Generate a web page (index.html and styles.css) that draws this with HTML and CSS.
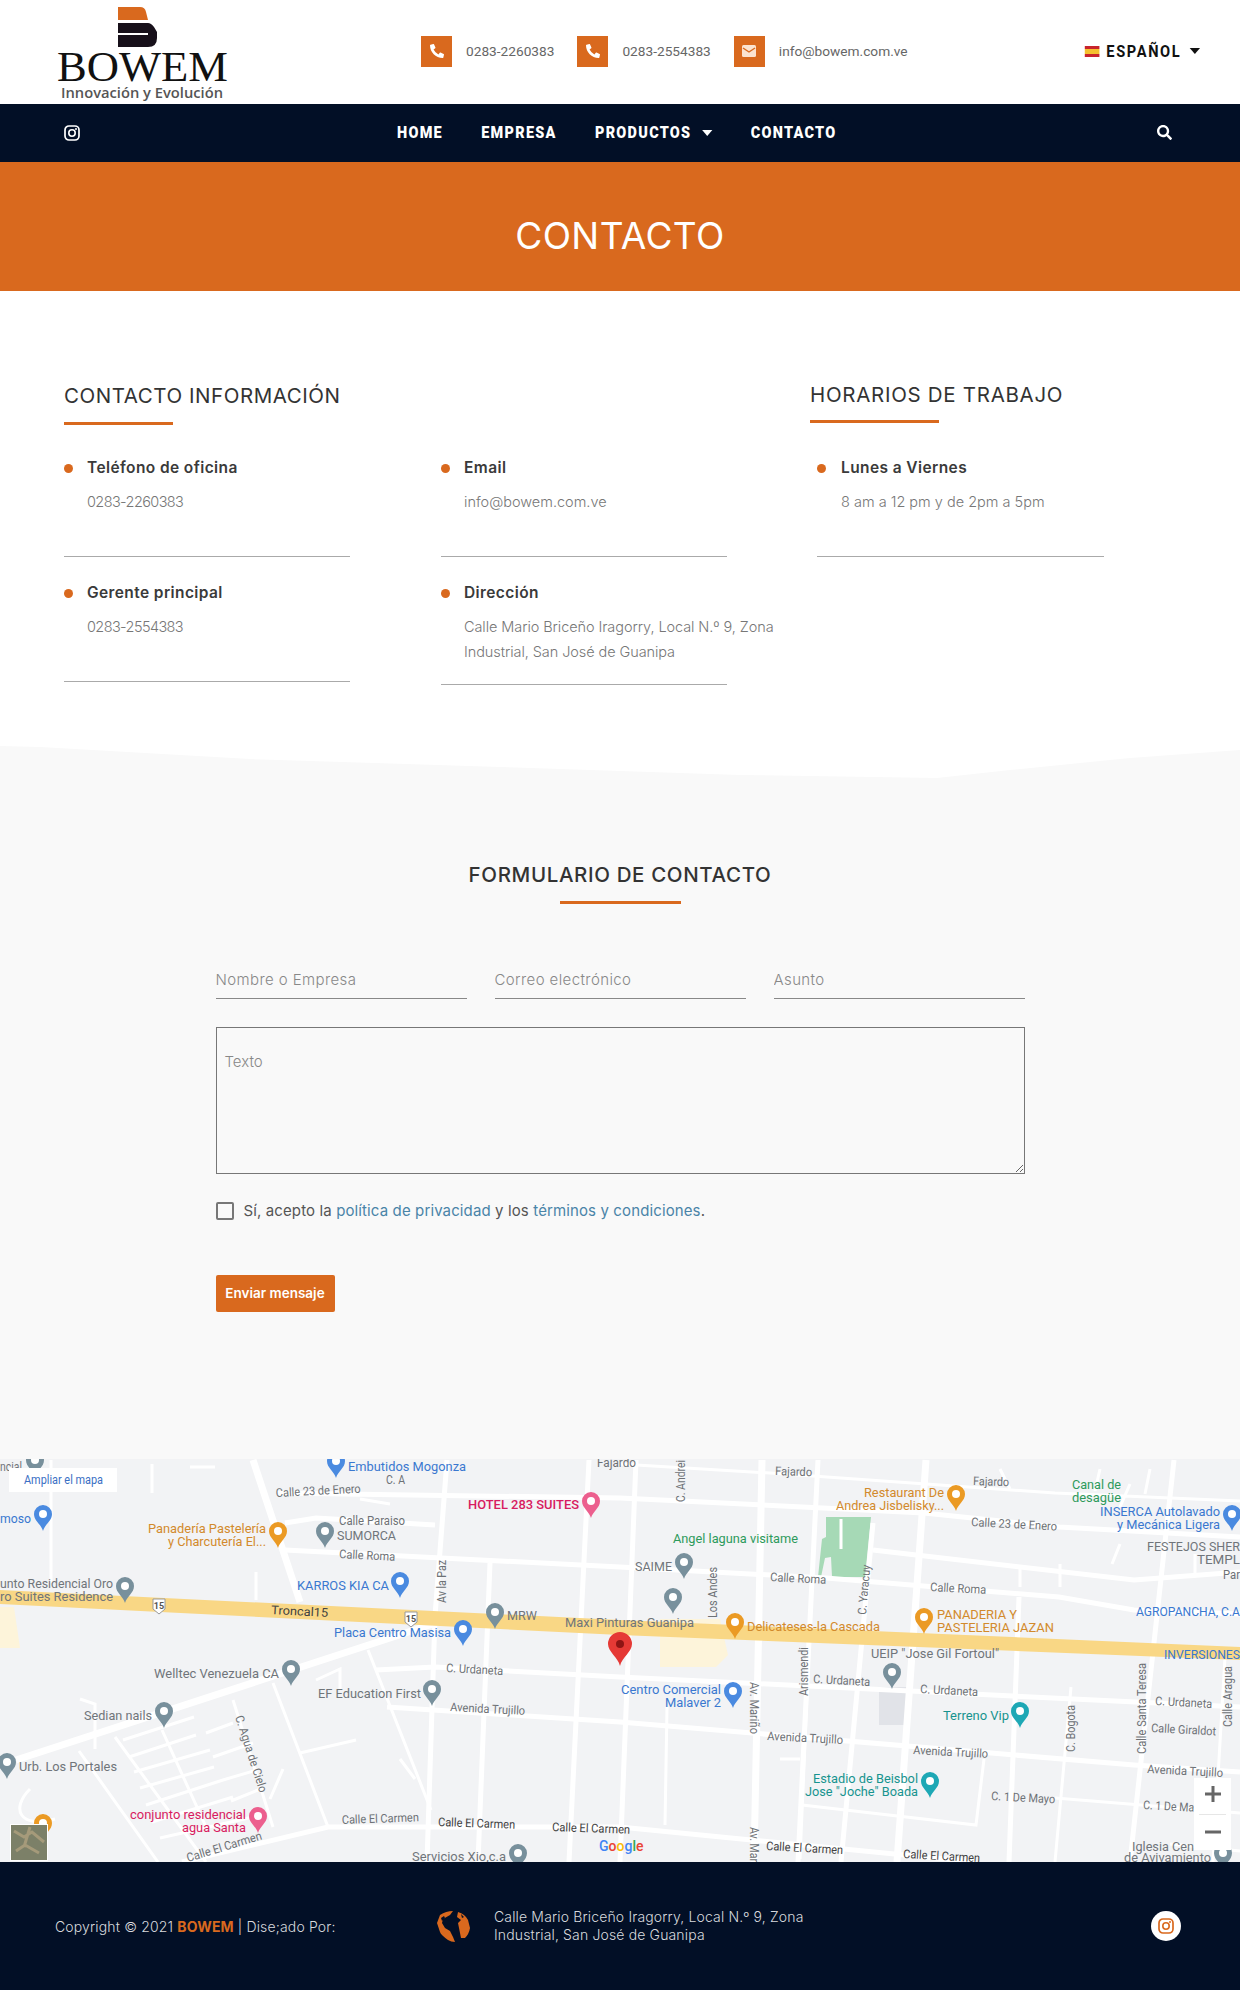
FILE: index.html
```html
<!DOCTYPE html>
<html lang="es">
<head>
    <meta charset="UTF-8">
    <meta name="viewport" content="width=device-width, initial-scale=1.0">
    <title>Contacto - Bowem</title>
    <link rel="stylesheet" href="styles.css">
</head>
<body>
    <svg class="defs" width="0" height="0">
        <symbol id="i-phone" viewBox="0 0 512 512"><path d="M497.39 361.8l-112-48a24 24 0 0 0-28 6.9l-49.6 60.6A370.66 370.66 0 0 1 130.6 204.11l60.6-49.6a23.94 23.94 0 0 0 6.9-28l-48-112A24.16 24.16 0 0 0 122.6.61l-104 24A24 24 0 0 0 0 48c0 256.5 207.9 464 464 464a24 24 0 0 0 23.4-18.6l24-104a24.29 24.29 0 0 0-14.01-27.6z"/></symbol>
        <symbol id="i-insta" viewBox="0 0 16 16"><rect x="1" y="1" width="14" height="14" rx="4" fill="none" stroke="currentColor" stroke-width="1.7"/><circle cx="8" cy="8" r="3.2" fill="none" stroke="currentColor" stroke-width="1.6"/><circle cx="12" cy="4" r="1" fill="currentColor"/></symbol>
        <symbol id="pin" viewBox="0 0 18 26"><path d="M9 0a9 9 0 0 0-9 9c0 7 7 10 9 17 2-7 9-10 9-17a9 9 0 0 0-9-9z"/><circle cx="9" cy="9" r="4" fill="#fff"/></symbol>
    </svg>

    <header class="top">
        <svg class="logo" width="171" height="104" viewBox="0 0 171 104">
            <path d="M61 7h22q5 0 6 5l2 8H61z" fill="#d9691e"/>
            <path d="M61 23h30q3 0 6 4l3 5v6q0 9-9 9H61zM61 33v2h30v-2z" fill="#17101a" fill-rule="evenodd"/>
            <text x="0" y="81" class="logo-name" textLength="171" lengthAdjust="spacingAndGlyphs">BOWEM</text>
            <text x="4" y="98" class="logo-tag" textLength="162" lengthAdjust="spacingAndGlyphs">Innovación y Evolución</text>
        </svg>
        <div class="top-contacts">
            <div class="top-item">
                <span class="top-icon"><svg width="14" height="14"><use href="#i-phone"/></svg></span>
                <span>0283-2260383</span>
            </div>
            <div class="top-item">
                <span class="top-icon"><svg width="14" height="14"><use href="#i-phone"/></svg></span>
                <span>0283-2554383</span>
            </div>
            <div class="top-item">
                <span class="top-icon"><svg width="14" height="12" viewBox="0 0 14 12"><rect width="14" height="12" rx="1.5" fill="#fbe3d0"/><path d="M1 3l6 4 6-4" fill="none" stroke="#d9691e" stroke-width="1.4"/></svg></span>
                <span>info@bowem.com.ve</span>
            </div>
        </div>
        <div class="lang">
            <span class="flag"></span>
            <span class="lang-name">ESPAÑOL</span>
            <span class="caret"></span>
        </div>
    </header>

    <nav class="nav">
        <svg class="nav-insta" width="16" height="16"><use href="#i-insta"/></svg>
        <ul class="nav-links">
            <li>HOME</li>
            <li>EMPRESA</li>
            <li>PRODUCTOS <span class="caret"></span></li>
            <li>CONTACTO</li>
        </ul>
        <svg class="nav-search" width="15" height="15" viewBox="0 0 512 512"><path fill="#fff" d="M505 442.7L405.3 343c-4.5-4.5-10.6-7-17-7H372c27.6-35.3 44-79.7 44-128C416 93.1 322.9 0 208 0S0 93.1 0 208s93.1 208 208 208c48.3 0 92.7-16.4 128-44v16.3c0 6.4 2.5 12.5 7 17l99.7 99.7c9.4 9.4 24.6 9.4 33.9 0l28.3-28.3c9.4-9.4 9.4-24.6.1-34zM208 336c-70.7 0-128-57.2-128-128 0-70.7 57.2-128 128-128 70.7 0 128 57.2 128 128 0 70.7-57.2 128-128 128z"/></svg>
    </nav>

    <div class="banner"><h1>CONTACTO</h1></div>

    <section class="info">
        <div class="info-left">
            <h2 class="sec-title sec-title-left">CONTACTO INFORMACIÓN</h2>
            <div class="rule rule-left"></div>
            <div class="info-grid">
                <div class="info-item">
                    <h3>Teléfono de oficina</h3>
                    <p class="num">0283-2260383</p>
                </div>
                <div class="info-item">
                    <h3>Email</h3>
                    <p>info@bowem.com.ve</p>
                </div>
                <div class="info-item">
                    <h3>Gerente principal</h3>
                    <p class="num">0283-2554383</p>
                </div>
                <div class="info-item info-item-long">
                    <h3>Dirección</h3>
                    <p>Calle Mario Briceño Iragorry, Local N.º 9, Zona Industrial, San José de Guanipa</p>
                </div>
            </div>
        </div>
        <div class="info-right">
            <h2 class="sec-title">HORARIOS DE TRABAJO</h2>
            <div class="rule rule-right"></div>
            <div class="info-item info-item-hours">
                <h3>Lunes a Viernes</h3>
                <p>8 am a 12 pm y de 2pm a 5pm</p>
            </div>
        </div>
    </section>

    <svg class="wave" width="1240" height="32" viewBox="0 0 1240 32"><path d="M0 0L40 1 250 13 500 21 740 29 937 32 1010 24 1130 12 1240 4V32H0z"/></svg>

    <section class="form-wrap">
        <h2 class="form-title">FORMULARIO DE CONTACTO</h2>
        <div class="rule rule-form"></div>
        <form class="form">
            <div class="form-row">
                <input type="text" placeholder="Nombre o Empresa">
                <input type="text" placeholder="Correo electrónico">
                <input type="text" placeholder="Asunto">
            </div>
            <textarea placeholder="Texto"></textarea>
            <label class="accept">
                <span class="check"></span>
                <span>Sí, acepto la <a href="#">política de privacidad</a> y los <a href="#">términos y condiciones</a>.</span>
            </label>
            <button type="button" class="send">Enviar mensaje</button>
        </form>
    </section>

    <section class="map">
        <svg width="1240" height="403" viewBox="0 0 1240 403">
            <rect width="1240" height="403" fill="#f2f3f5"/>
            <!-- areas -->
            <path d="M0 148h14l6 41H0z" fill="#fdf4da"/>
            <path d="M660 160h60l8 36-12 12h-56z" fill="#fdf4da"/>
            <path d="M826 58h45l-6 60h-33l-1-20-6 1-4 19h-3l4-38 4-2z" fill="#a6d9b6"/>
            <rect x="879" y="228" width="28" height="38" fill="#e1e3e8"/>
            <!-- minor roads -->
            <g class="road-thin">
                <path d="M79 292L158 403M115 278L206 403M162 271L206 368M233 241L273 368M273 224L328 368M368 191L431 351"/>
                <path d="M123 281L194 258M129 298L196 276M134 313L210 291M140 329L214 308M146 346L223 321M152 363L233 338M160 379L253 358M206 274L233 264M213 298L253 284M223 321L257 311M231 342L263 329M300 294L356 281"/>
                <path d="M51 1V124M256 113V141M152 5V34M190 8L215 8M360 40L390 45M316 221L340 210V230M80 240L95 245V290M30 330C10 350 20 370 55 360M400 300L415 320M283 310L270 340"/>
                <path d="M1071 228L1055 403M667 248L665 366M1225 198L1213 403M841 90V60M1000 10L1010 30M1100 10L1095 32M1150 10L1145 35M1120 85L1112 105M1195 95V115M778 280H800M780 300H800M812 120L800 400"/>
                <path d="M802 346L976 366L984 300M1055 339L1240 354M620 5L770 14L1055 34L1240 42M1020 110V128M1060 105V128M1130 25L1120 48M1170 385L1240 392"/>
            </g>
            <!-- main roads -->
            <g class="road">
                <path d="M277 34L620 39L924 54L1059 68L1240 78M285 91L620 108L826 119L1059 138L1134 151L1240 155M873 91L1134 121L1240 113M376 211L435 208L620 218L1240 248M387 248L620 263L1134 306L1240 313M182 403L328 368L620 368L976 403M285 64L316 59L435 66"/>
                <path d="M447 1L435 157L427 403M490 104L478 403M589 1L569 403M636 1L620 403M818 1L798 403M873 64L841 403M1019 138L1009 403M1174 1L1130 403"/>
            </g>
            <g class="road-wide">
                <path d="M253 1L300 143M16 301L439 163M762 1L754 403M926 1L897 403"/>
            </g>
            <!-- highway -->
            <path d="M0 131L620 161L1240 188V201L620 176L0 145z" fill="#f9d785"/>

            <!-- shields -->
            <path d="M153 140h12v10l-6 5-6-5zM405 153h12v10l-6 5-6-5z" fill="#fff" stroke="#999"/>
            <text x="159" y="150" class="t-shield">15</text>
            <text x="411" y="163" class="t-shield">15</text>

            <!-- pins -->
            <g class="p-blue">
                <use href="#pin" x="327" y="-7" width="18" height="26"/><use href="#pin" x="34" y="46" width="18" height="26"/><use href="#pin" x="391" y="113" width="18" height="26"/><use href="#pin" x="454" y="161" width="18" height="26"/><use href="#pin" x="1223" y="46" width="18" height="26"/><use href="#pin" x="724" y="223" width="18" height="26"/>
            </g>
            <g class="p-grey">
                <use href="#pin" x="26" y="-8" width="18" height="26"/><use href="#pin" x="316" y="63" width="18" height="26"/><use href="#pin" x="116" y="118" width="18" height="26"/><use href="#pin" x="486" y="144" width="18" height="26"/><use href="#pin" x="282" y="201" width="18" height="26"/><use href="#pin" x="423" y="221" width="18" height="26"/><use href="#pin" x="155" y="243" width="18" height="26"/><use href="#pin" x="-2" y="294" width="18" height="26"/><use href="#pin" x="509" y="385" width="18" height="26"/><use href="#pin" x="675" y="94" width="18" height="26"/><use href="#pin" x="664" y="129" width="18" height="26"/><use href="#pin" x="883" y="204" width="18" height="26"/><use href="#pin" x="1214" y="385" width="18" height="26"/>
            </g>
            <g class="p-orange">
                <use href="#pin" x="269" y="63" width="18" height="26"/><use href="#pin" x="34" y="355" width="18" height="26"/><use href="#pin" x="726" y="154" width="18" height="26"/><use href="#pin" x="947" y="26" width="18" height="26"/><use href="#pin" x="915" y="149" width="18" height="26"/>
            </g>
            <g class="p-pink">
                <use href="#pin" x="582" y="33" width="18" height="26"/><use href="#pin" x="249" y="348" width="18" height="26"/>
            </g>
            <g class="p-teal">
                <use href="#pin" x="1011" y="243" width="18" height="26"/><use href="#pin" x="921" y="313" width="18" height="26"/>
            </g>
            <path d="M620 173a12 12 0 0 0-12 12c0 8 10 13 12 22 2-9 12-14 12-22a12 12 0 0 0-12-12z" fill="#e53935"/>
            <circle cx="620" cy="185" r="4" fill="#8e1414"/>

            <!-- place labels -->
            <g class="t-blue">
                <text x="348" y="12" textLength="118" lengthAdjust="spacingAndGlyphs">Embutidos Mogonza</text>
                <text x="0" y="64" textLength="31" lengthAdjust="spacingAndGlyphs">moso</text>
                <text x="297" y="131" textLength="92" lengthAdjust="spacingAndGlyphs">KARROS KIA CA</text>
                <text x="334" y="178" textLength="117" lengthAdjust="spacingAndGlyphs">Placa Centro Masisa</text>
                <text x="1100" y="57" textLength="120" lengthAdjust="spacingAndGlyphs">INSERCA Autolavado</text>
                <text x="1117" y="70" textLength="103" lengthAdjust="spacingAndGlyphs">y Mecánica Ligera</text>
                <text x="1136" y="157" textLength="104" lengthAdjust="spacingAndGlyphs">AGROPANCHA, C.A</text>
                <text x="1164" y="200" textLength="76" lengthAdjust="spacingAndGlyphs">INVERSIONES</text>
                <text x="621" y="235" textLength="100" lengthAdjust="spacingAndGlyphs">Centro Comercial</text>
                <text x="665" y="248" textLength="56" lengthAdjust="spacingAndGlyphs">Malaver 2</text>
            </g>
            <g class="t-orange">
                <text x="148" y="74" textLength="118" lengthAdjust="spacingAndGlyphs">Panadería Pastelería</text>
                <text x="168" y="87" textLength="98" lengthAdjust="spacingAndGlyphs">y Charcutería El...</text>
                <text x="864" y="38" textLength="80" lengthAdjust="spacingAndGlyphs">Restaurant De</text>
                <text x="836" y="51" textLength="108" lengthAdjust="spacingAndGlyphs">Andrea Jisbelisky...</text>
                <text x="747" y="172" textLength="133" lengthAdjust="spacingAndGlyphs">Delicateses-la Cascada</text>
                <text x="937" y="160" textLength="80" lengthAdjust="spacingAndGlyphs">PANADERIA Y</text>
                <text x="937" y="173" textLength="117" lengthAdjust="spacingAndGlyphs">PASTELERIA JAZAN</text>
            </g>
            <g class="t-pink">
                <text x="468" y="50" textLength="111" lengthAdjust="spacingAndGlyphs" class="t-strong">HOTEL 283 SUITES</text>
                <text x="130" y="360" textLength="116" lengthAdjust="spacingAndGlyphs">conjunto residencial</text>
                <text x="182" y="373" textLength="64" lengthAdjust="spacingAndGlyphs">agua Santa</text>
            </g>
            <g class="t-green">
                <text x="673" y="84" textLength="125" lengthAdjust="spacingAndGlyphs">Angel laguna visitame</text>
                <text x="1072" y="30" textLength="49" lengthAdjust="spacingAndGlyphs">Canal de</text>
                <text x="1072" y="43" textLength="49" lengthAdjust="spacingAndGlyphs">desagüe</text>
            </g>
            <g class="t-teal">
                <text x="943" y="261" textLength="66" lengthAdjust="spacingAndGlyphs">Terreno Vip</text>
                <text x="813" y="324" textLength="105" lengthAdjust="spacingAndGlyphs">Estadio de Beisbol</text>
                <text x="805" y="337" textLength="113" lengthAdjust="spacingAndGlyphs">Jose "Joche" Boada</text>
            </g>
            <g class="t-grey">
                <text x="0" y="12" textLength="22" lengthAdjust="spacingAndGlyphs">ncial</text>
                <text x="337" y="81" textLength="59" lengthAdjust="spacingAndGlyphs">SUMORCA</text>
                <text x="0" y="129" textLength="113" lengthAdjust="spacingAndGlyphs">unto Residencial Oro</text>
                <text x="0" y="142" textLength="113" lengthAdjust="spacingAndGlyphs">ro Suites Residence</text>
                <text x="507" y="161" textLength="30" lengthAdjust="spacingAndGlyphs">MRW</text>
                <text x="565" y="168" textLength="129" lengthAdjust="spacingAndGlyphs">Maxi Pinturas Guanipa</text>
                <text x="154" y="219" textLength="125" lengthAdjust="spacingAndGlyphs">Welltec Venezuela CA</text>
                <text x="318" y="239" textLength="103" lengthAdjust="spacingAndGlyphs">EF Education First</text>
                <text x="84" y="261" textLength="68" lengthAdjust="spacingAndGlyphs">Sedian nails</text>
                <text x="19" y="312" textLength="98" lengthAdjust="spacingAndGlyphs">Urb. Los Portales</text>
                <text x="412" y="402" textLength="94" lengthAdjust="spacingAndGlyphs">Servicios Xio,c.a</text>
                <text x="635" y="112" textLength="37" lengthAdjust="spacingAndGlyphs">SAIME</text>
                <text x="871" y="199" textLength="128" lengthAdjust="spacingAndGlyphs">UEIP "Jose Gil Fortoul"</text>
                <text x="1147" y="92" textLength="93" lengthAdjust="spacingAndGlyphs">FESTEJOS SHER</text>
                <text x="1197" y="105" textLength="43" lengthAdjust="spacingAndGlyphs">TEMPL</text>
                <text x="1132" y="392" textLength="62" lengthAdjust="spacingAndGlyphs">Iglesia Cen</text>
                <text x="1124" y="403" textLength="87" lengthAdjust="spacingAndGlyphs">de Avivamiento</text>
            </g>

            <!-- street labels -->
            <g class="t-street">
                <text x="386" y="25" textLength="19" lengthAdjust="spacingAndGlyphs">C. A</text>
                <text x="276" y="38" transform="rotate(-3 276 38)" textLength="85" lengthAdjust="spacingAndGlyphs">Calle 23 de Enero</text>
                <text x="339" y="66" textLength="66" lengthAdjust="spacingAndGlyphs">Calle Paraiso</text>
                <text x="339" y="99" transform="rotate(3 339 99)" textLength="56" lengthAdjust="spacingAndGlyphs">Calle Roma</text>
                <text x="446" y="144" transform="rotate(-90 446 144)" textLength="43" lengthAdjust="spacingAndGlyphs">Av la Paz</text>
                <text x="446" y="213" transform="rotate(3 446 213)" textLength="57" lengthAdjust="spacingAndGlyphs">C. Urdaneta</text>
                <text x="450" y="252" transform="rotate(3 450 252)" textLength="75" lengthAdjust="spacingAndGlyphs">Avenida Trujillo</text>
                <text x="235" y="258" transform="rotate(72 235 258)" textLength="80" lengthAdjust="spacingAndGlyphs">C. Agua de Cielo</text>
                <text x="342" y="365" transform="rotate(-2 342 365)" textLength="77" lengthAdjust="spacingAndGlyphs">Calle El Carmen</text>
                <text x="188" y="403" transform="rotate(-17 188 403)" textLength="78" lengthAdjust="spacingAndGlyphs">Calle El Carmen</text>
                <text x="597" y="8" textLength="39" lengthAdjust="spacingAndGlyphs">Fajardo</text>
                <text x="775" y="16" transform="rotate(2 775 16)" textLength="37" lengthAdjust="spacingAndGlyphs">Fajardo</text>
                <text x="973" y="26" transform="rotate(2 973 26)" textLength="36" lengthAdjust="spacingAndGlyphs">Fajardo</text>
                <text x="971" y="67" transform="rotate(3 971 67)" textLength="86" lengthAdjust="spacingAndGlyphs">Calle 23 de Enero</text>
                <text x="770" y="122" transform="rotate(3 770 122)" textLength="56" lengthAdjust="spacingAndGlyphs">Calle Roma</text>
                <text x="930" y="132" transform="rotate(3 930 132)" textLength="56" lengthAdjust="spacingAndGlyphs">Calle Roma</text>
                <text x="1223" y="120" textLength="17" lengthAdjust="spacingAndGlyphs">Par</text>
                <text x="685" y="43" transform="rotate(-90 685 43)" textLength="42" lengthAdjust="spacingAndGlyphs">C. Andrei</text>
                <text x="717" y="159" transform="rotate(-90 717 159)" textLength="51" lengthAdjust="spacingAndGlyphs">Los Andes</text>
                <text x="866" y="156" transform="rotate(-85 866 156)" textLength="50" lengthAdjust="spacingAndGlyphs">C. Yaracuy</text>
                <text x="808" y="237" transform="rotate(-90 808 237)" textLength="49" lengthAdjust="spacingAndGlyphs">Arismendi</text>
                <text x="813" y="224" transform="rotate(3 813 224)" textLength="57" lengthAdjust="spacingAndGlyphs">C. Urdaneta</text>
                <text x="920" y="234" transform="rotate(3 920 234)" textLength="58" lengthAdjust="spacingAndGlyphs">C. Urdaneta</text>
                <text x="1155" y="246" transform="rotate(3 1155 246)" textLength="57" lengthAdjust="spacingAndGlyphs">C. Urdaneta</text>
                <text x="750" y="223" transform="rotate(90 750 223)" textLength="52" lengthAdjust="spacingAndGlyphs">Av. Mariño</text>
                <text x="750" y="368" transform="rotate(90 750 368)" textLength="35" lengthAdjust="spacingAndGlyphs">Av. Mar</text>
                <text x="767" y="281" transform="rotate(3 767 281)" textLength="76" lengthAdjust="spacingAndGlyphs">Avenida Trujillo</text>
                <text x="913" y="295" transform="rotate(3 913 295)" textLength="75" lengthAdjust="spacingAndGlyphs">Avenida Trujillo</text>
                <text x="1147" y="314" transform="rotate(3 1147 314)" textLength="76" lengthAdjust="spacingAndGlyphs">Avenida Trujillo</text>
                <text x="1151" y="273" transform="rotate(3 1151 273)" textLength="65" lengthAdjust="spacingAndGlyphs">Calle Giraldot</text>
                <text x="1075" y="293" transform="rotate(-90 1075 293)" textLength="47" lengthAdjust="spacingAndGlyphs">C. Bogota</text>
                <text x="1146" y="295" transform="rotate(-90 1146 295)" textLength="91" lengthAdjust="spacingAndGlyphs">Calle Santa Teresa</text>
                <text x="1232" y="268" transform="rotate(-90 1232 268)" textLength="61" lengthAdjust="spacingAndGlyphs">Calle Aragua</text>
                <text x="991" y="341" transform="rotate(3 991 341)" textLength="64" lengthAdjust="spacingAndGlyphs">C. 1 De Mayo</text>
                <text x="1143" y="350" transform="rotate(3 1143 350)" textLength="51" lengthAdjust="spacingAndGlyphs">C. 1 De Ma</text>
            </g>
            <g class="t-street-dark">
                <text x="271" y="155" transform="rotate(3 271 155)" textLength="57" lengthAdjust="spacingAndGlyphs">Troncal15</text>
                <text x="438" y="367" transform="rotate(2 438 367)" textLength="77" lengthAdjust="spacingAndGlyphs">Calle El Carmen</text>
                <text x="552" y="372" transform="rotate(2 552 372)" textLength="78" lengthAdjust="spacingAndGlyphs">Calle El Carmen</text>
                <text x="766" y="391" transform="rotate(3 766 391)" textLength="77" lengthAdjust="spacingAndGlyphs">Calle El Carmen</text>
                <text x="903" y="399" transform="rotate(3 903 399)" textLength="77" lengthAdjust="spacingAndGlyphs">Calle El Carmen</text>
            </g>

            <!-- map controls -->
            <rect x="9" y="9" width="108" height="24" fill="#fff"/>
            <text x="24" y="25" class="t-enlarge" textLength="79" lengthAdjust="spacingAndGlyphs">Ampliar el mapa</text>
            <rect x="10" y="365" width="38" height="37" fill="#fff"/>
            <rect x="11" y="366" width="36" height="35" fill="#7c8068"/>
            <path d="M14 372l10 6 8-5 12 10M16 392l9-6 14 8M30 368l-6 20" stroke="#a59a7a" stroke-width="3" fill="none"/>
            <text x="599" y="392" class="t-google"><tspan fill="#4285f4">G</tspan><tspan fill="#ea4335">o</tspan><tspan fill="#fbbc05">o</tspan><tspan fill="#4285f4">g</tspan><tspan fill="#34a853">l</tspan><tspan fill="#ea4335">e</tspan></text>
            <rect x="1194" y="319" width="37" height="72" fill="#fff"/>
            <rect x="1199" y="355" width="27" height="1" fill="#e6e6e6"/>
            <path d="M1205 335h16M1213 327v16M1205 373h16" stroke="#666" stroke-width="3"/>
        </svg>
    </section>

    <footer class="footer">
        <p class="copy">Copyright © 2021 <b>BOWEM</b> | Dise;ado Por:</p>
        <svg class="globe" width="33" height="33" viewBox="0 0 33 33">
            <path d="M3 5Q9 1 16 1L13 5 6 9 5 13 8 18 13 21 16 27 18 32Q14 32 11 30 4 25 3 22L0 13z" fill="#d9691e"/>
            <path d="M21 2Q28 4 31 10L33 18Q32 24 28 28L24 28 22 18 21 13 24 10 20 7z" fill="#d9691e"/>
            <path d="M24 4l3 3-2 1zM4 8l3-2 1 2-3 3z" fill="#020f26"/>
        </svg>
        <p class="foot-addr">Calle Mario Briceño Iragorry, Local N.º 9, Zona Industrial, San José de Guanipa</p>
        <span class="foot-insta"><svg width="16" height="16"><use href="#i-insta"/></svg></span>
    </footer>
</body>
</html>
```

FILE: styles.css
```css
* {
    box-sizing: border-box;
}
body {
    margin: 0;
    width: 1240px;
    background-color: #fff;
    font-family: Inter, "Open Sans", sans-serif;
    color: #333;
}
h1, h2, h3, p, ul {
    margin: 0;
    padding: 0;
}
.defs {
    position: absolute;
}

/* top bar */
.top {
    display: flex;
    align-items: center;
    height: 104px;
    padding: 0 40px 0 57px;
}
.logo {
    flex: none;
}
.logo-name {
    font-family: "Liberation Serif", serif;
    font-size: 42px;
    fill: #111;
}
.logo-tag {
    font-family: "Open Sans", sans-serif;
    font-size: 14px;
    font-weight: 600;
    fill: #555;
}
.top-contacts {
    display: flex;
    margin: 0 0 2px 193px;
}
.top-item {
    display: flex;
    align-items: center;
    font-family: Roboto, sans-serif;
    font-size: 13.7px;
    color: #666;
    margin-right: 23px;
}
.top-icon {
    display: flex;
    align-items: center;
    justify-content: center;
    width: 31px;
    height: 31px;
    margin-right: 14px;
    background-color: #d9691e;
    fill: #fff;
}
.lang {
    display: flex;
    align-items: center;
    margin: 0 0 2px auto;
    font-family: Roboto, sans-serif;
    font-size: 17px;
    font-weight: 700;
    letter-spacing: 1.9px;
    color: #111;
    transform: scaleX(.86);
    transform-origin: right center;
}
.flag {
    width: 17px;
    height: 11px;
    margin-right: 8px;
    background: linear-gradient(#c8242c 25%, #f5c02e 25%, #f5c02e 75%, #c8242c 75%);
}
.caret {
    display: inline-block;
    width: 0;
    height: 0;
    border-left: 6px solid transparent;
    border-right: 6px solid transparent;
    border-top: 6px solid currentColor;
    vertical-align: 2px;
    margin-left: 7px;
}
.lang .caret {
    margin-left: 10px;
}

/* nav */
.nav {
    display: flex;
    align-items: center;
    height: 58px;
    padding: 0 68px 0 64px;
    background-color: #020f26;
    color: #fff;
}
.nav-insta {
    flex: none;
    color: #fff;
}
.nav-links {
    display: flex;
    list-style: none;
    gap: 45px;
    margin: 0 0 2px 317px;
    font-family: Roboto, sans-serif;
    font-size: 17px;
    font-weight: 900;
    letter-spacing: 1.5px;
    transform: scaleX(.85);
    transform-origin: left center;
}
.nav-search {
    margin: 0 0 1px auto;
}

/* banner */
.banner {
    display: flex;
    align-items: center;
    justify-content: center;
    height: 129px;
    background-color: #d9691e;
}
.banner h1 {
    margin-top: 18px;
    font-size: 37px;
    font-weight: 400;
    letter-spacing: .4px;
    color: #fff;
}

/* contact info */
.info {
    display: flex;
    height: 455px;
    padding: 86px 0 0 64px;
}
.info-left {
    width: 746px;
}
.sec-title {
    font-size: 20.5px;
    font-weight: 400;
    line-height: 36px;
    letter-spacing: .7px;
    color: #333;
}
.sec-title-left {
    margin-top: 1px;
    letter-spacing: .55px;
}
.rule {
    height: 3px;
    background-color: #d9691e;
}
.rule-left {
    width: 109px;
    margin-top: 8px;
    margin-bottom: 31px;
}
.rule-right {
    width: 129px;
    margin-top: 7px;
    margin-bottom: 33px;
}
.info-grid {
    display: grid;
    grid-template-columns: 286px 286px;
    column-gap: 91px;
    row-gap: 24px;
    align-items: start;
}
.info-item {
    position: relative;
    padding: 0 0 42px 23px;
    border-bottom: 1px solid #aaa;
}
.info-item::before {
    content: "";
    position: absolute;
    left: 0;
    top: 8px;
    width: 9px;
    height: 9px;
    border-radius: 50%;
    background-color: #d9691e;
}
.info-item h3 {
    font-size: 15.5px;
    font-weight: 600;
    line-height: 24px;
    letter-spacing: .4px;
    color: #3a3a3a;
}
.info-item p {
    margin-top: 9px;
    font-size: 14.5px;
    font-weight: 300;
    line-height: 25px;
    color: #777;
}
.info-item .num {
    letter-spacing: -.6px;
}
.info-item-long {
    padding-bottom: 20px;
}
.info-item-long p {
    width: 332px;
    letter-spacing: -.08px;
}
.info-item-hours {
    width: 287px;
    margin-left: 7px;
    padding-left: 24px;
}

/* wave */
.wave {
    display: block;
    fill: #f9f9f9;
}

/* form */
.form-wrap {
    height: 681px;
    padding-top: 79px;
    background-color: #f9f9f9;
}
.form-title {
    font-size: 20.5px;
    font-weight: 500;
    line-height: 36px;
    letter-spacing: .63px;
    text-align: center;
    color: #333;
}
.rule-form {
    width: 121px;
    margin: 8px auto 0;
}
.form {
    width: 809px;
    margin: 56px auto 0;
}
.form-row {
    display: grid;
    grid-template-columns: 251px 251px 251px;
    column-gap: 28px;
}
.form input {
    height: 39px;
    padding: 0;
    border: 0;
    border-bottom: 1px solid #888;
    background: transparent;
    font-family: Inter, sans-serif;
    font-size: 15px;
    letter-spacing: .4px;
}
.form input::placeholder,
.form textarea::placeholder {
    color: #888;
    font-weight: 300;
}
.form textarea {
    display: block;
    width: 809px;
    height: 147px;
    margin-top: 28px;
    padding: 24px 8px;
    border: 1px solid #777;
    background: transparent;
    font-family: Inter, sans-serif;
    font-size: 15px;
    border-radius: 0;
}
.accept {
    display: flex;
    align-items: center;
    margin-top: 27px;
    font-size: 15px;
    letter-spacing: .12px;
    color: #555;
}
.accept a {
    color: #4a84a8;
    text-decoration: none;
}
.check {
    flex: none;
    width: 18px;
    height: 18px;
    margin-right: 10px;
    border: 2px solid #777;
    border-radius: 2px;
}
.send {
    display: block;
    width: 119px;
    height: 37px;
    margin-top: 55px;
    border: 0;
    border-radius: 2px;
    background-color: #d9691e;
    font-family: Inter, sans-serif;
    font-size: 13.5px;
    font-weight: 600;
    color: #fff;
    padding: 0 0 2px;
}

/* map */
.map {
    height: 403px;
}
.map svg {
    display: block;
}
.road { fill: none; stroke: #fff; stroke-width: 5; }
.road-wide { fill: none; stroke: #fff; stroke-width: 7; }
.road-thin { fill: none; stroke: #fff; stroke-width: 3; }
.p-blue { fill: #4a8ae0; }
.p-grey { fill: #78909c; }
.p-orange { fill: #eb9a24; }
.p-pink { fill: #ec5f8e; }
.p-teal { fill: #1ea8b5; }
.map text {
    font-family: Roboto, sans-serif;
    font-size: 13.5px;
}
.t-blue { fill: #3a78d0; }
.t-orange { fill: #d28a2c; }
.t-pink { fill: #d81b60; }
.t-strong { font-weight: 500; }
.t-green { fill: #2d9a5b; }
.t-teal { fill: #17938f; }
.t-grey { fill: #70757a; }
.map .t-street text {
    font-size: 12px;
    fill: #6d7175;
}
.map .t-street-dark text {
    font-size: 12px;
    fill: #3f3f3f;
}
.map .t-shield {
    font-size: 9px;
    font-weight: 700;
    fill: #555;
    text-anchor: middle;
}
.map .t-enlarge {
    font-size: 12px;
    fill: #3a6fc4;
}
.map .t-google {
    font-size: 14px;
    font-weight: 500;
}

/* footer */
.footer {
    display: flex;
    align-items: center;
    height: 128px;
    padding-left: 55px;
    background-color: #020f26;
    color: #d8dade;
}
.copy {
    width: 382px;
    font-size: 14px;
    font-weight: 300;
    letter-spacing: .15px;
}
.copy b {
    color: #d9691e;
    font-weight: 700;
}
.globe {
    flex: none;
}
.foot-addr {
    width: 330px;
    margin-left: 24px;
    font-size: 14px;
    font-weight: 300;
    line-height: 18.5px;
    letter-spacing: .15px;
}
.foot-insta {
    display: flex;
    align-items: center;
    justify-content: center;
    width: 30px;
    height: 30px;
    margin-left: 327px;
    border-radius: 50%;
    background-color: #fff;
    color: #d9691e;
}
```
